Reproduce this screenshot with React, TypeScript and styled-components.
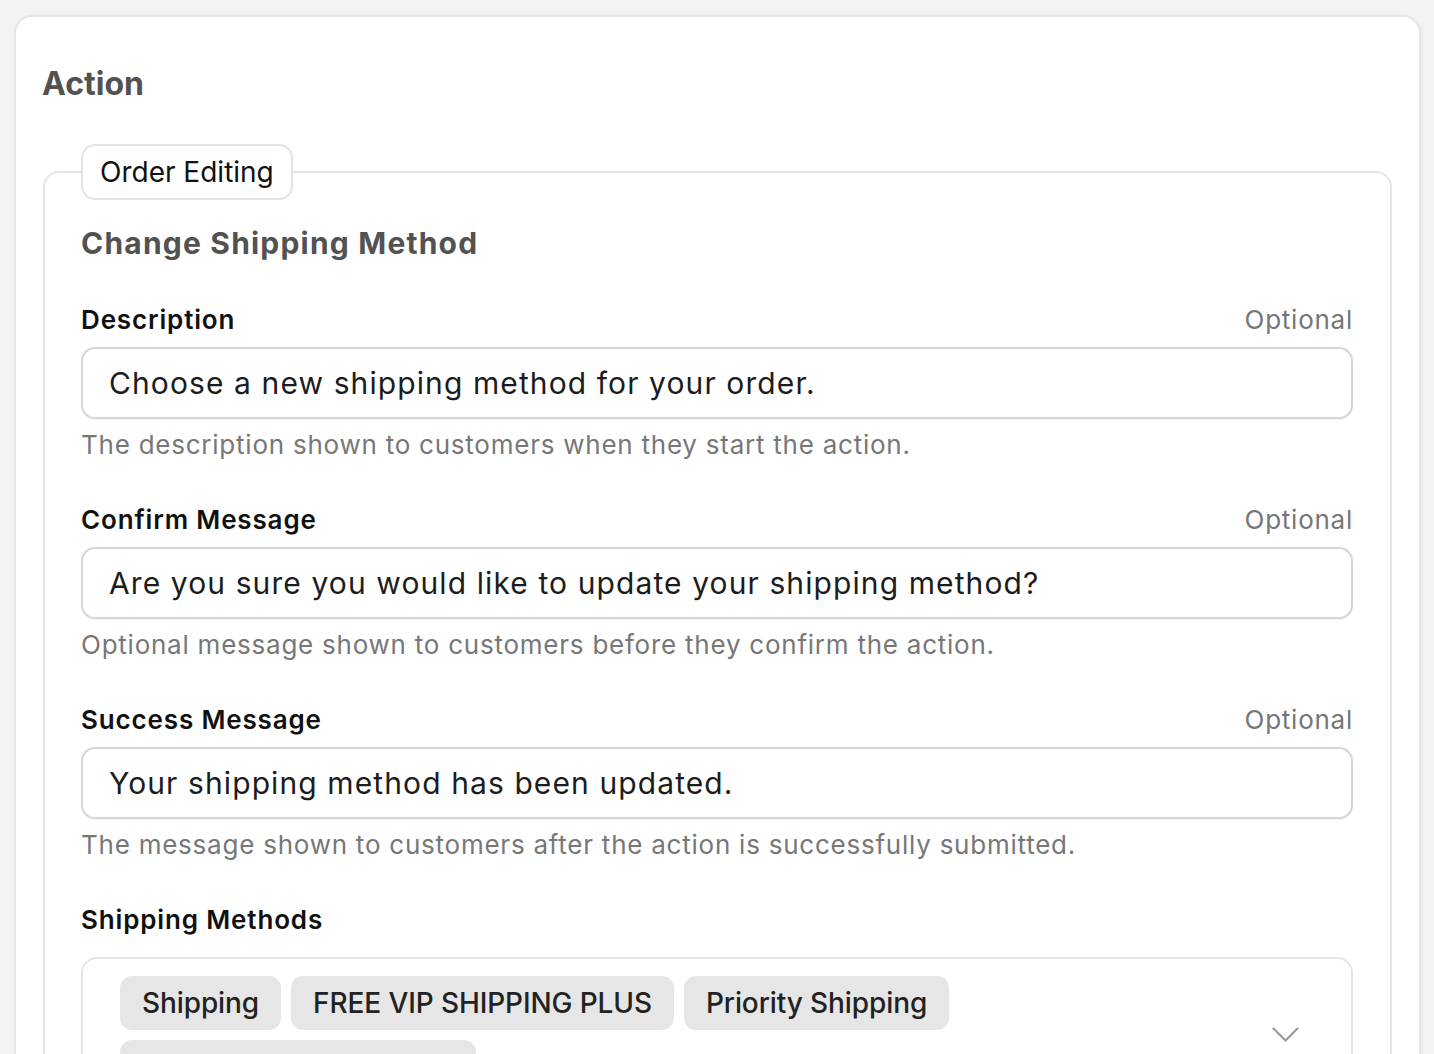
import { createGlobalStyle } from 'styled-components';
import styled from 'styled-components';

const GlobalStyle = createGlobalStyle`
  html, body {
    margin: 0;
    padding: 0;
    background: #f3f3f3;
    font-family: Inter, "Noto Sans", "Liberation Sans", sans-serif;
  }
  * {
    box-sizing: border-box;
  }
`;

const Page = styled.div`
  padding: 15px 13px 0 14px;
  height: 1054px;
  overflow: hidden;
`;

const Card = styled.section`
  background: #fff;
  border: 2px solid #e6e6e6;
  border-radius: 18px;
  box-shadow: 1px 1px 4px rgba(0, 0, 0, 0.05);
  padding: 47px 27px 40px 26px;
  min-height: 1200px;
`;

const Heading = styled.h2`
  margin: 0 0 40px;
  font-size: 32px;
  line-height: 40px;
  font-weight: 700;
  color: #525252;
`;

const Group = styled.fieldset`
  margin: 0 0 0 1px;
  padding: 24px 37px 40px 36px;
  border: 2px solid #e5e5e5;
  border-radius: 16px;
  min-width: 0;
`;

const GroupTag = styled.legend`
  margin: 0;
  padding: 0 17px;
  height: 56px;
  line-height: 52px;
  border: 2px solid #e3e3e3;
  border-radius: 14px;
  background: #fff;
  font-size: 28px;
  color: #111;
`;

const Title = styled.h3`
  margin: 0 0 42px;
  font-size: 30px;
  line-height: 38px;
  font-weight: 700;
  letter-spacing: 1.2px;
  color: #525252;
`;

const Field = styled.div`
  display: flex;
  flex-direction: column;
  margin-bottom: 43px;
`;

const LabelRow = styled.div<{ $gap: number }>`
  display: flex;
  justify-content: space-between;
  align-items: baseline;
  height: 32px;
  line-height: 32px;
  margin-bottom: ${(p) => p.$gap}px;
`;

const Label = styled.label`
  font-size: 26px;
  font-weight: 600;
  letter-spacing: 0.85px;
  color: #111;
`;

const Optional = styled.span`
  font-size: 26px;
  letter-spacing: 0.75px;
  color: #767676;
`;

const Input = styled.div`
  height: 72px;
  display: flex;
  align-items: center;
  padding: 0 26px;
  border: 2px solid #d6d6d6;
  border-radius: 14px;
  box-shadow: 0 1px 1px rgba(0, 0, 0, 0.05);
  font-size: 30px;
  letter-spacing: 1.1px;
  color: #1c1c1c;
  background: #fff;
`;

const Help = styled.div`
  margin-top: 10px;
  font-size: 26px;
  line-height: 32px;
  letter-spacing: 0.76px;
  color: #777;
`;

const Select = styled.div`
  display: flex;
  align-items: center;
  border: 2px solid #e5e5e5;
  border-radius: 16px;
  padding: 17px 52px 17px 37px;
  gap: 20px;
`;

const Chips = styled.div`
  flex: 1;
  display: flex;
  flex-wrap: wrap;
  gap: 10px;
`;

const Chip = styled.span`
  display: inline-flex;
  align-items: center;
  height: 54px;
  padding: 0 22px;
  border-radius: 12px;
  background: #e6e6e6;
  font-size: 28px;
  font-weight: 500;
  letter-spacing: -0.1px;
  color: #222;
`;

const Chevron = () => (
  <svg width="27" height="16" viewBox="0 0 27 16" fill="none">
    <path d="M1.5 1.5 L13.5 13.5 L25.5 1.5" stroke="#9a9a9a" strokeWidth="2.2" strokeLinecap="round" />
  </svg>
);

const fields = [
  {
    label: 'Description',
    value: 'Choose a new shipping method for your order.',
    help: 'The description shown to customers when they start the action.',
  },
  {
    label: 'Confirm Message',
    value: 'Are you sure you would like to update your shipping method?',
    help: 'Optional message shown to customers before they confirm the action.',
  },
  {
    label: 'Success Message',
    value: 'Your shipping method has been updated.',
    help: 'The message shown to customers after the action is successfully submitted.',
  },
];

const methods = ['Shipping', 'FREE VIP SHIPPING PLUS', 'Priority Shipping', 'Postal Ground Shipping'];

function App() {
  return (
    <Page>
      <GlobalStyle />
      <Card>
        <Heading>Action</Heading>
        <Group>
          <GroupTag>Order Editing</GroupTag>
          <Title>Change Shipping Method</Title>
          {fields.map((f) => (
            <Field key={f.label}>
              <LabelRow $gap={11}>
                <Label>{f.label}</Label>
                <Optional>Optional</Optional>
              </LabelRow>
              <Input>{f.value}</Input>
              <Help>{f.help}</Help>
            </Field>
          ))}
          <Field>
            <LabelRow $gap={21}>
              <Label>Shipping Methods</Label>
            </LabelRow>
            <Select>
              <Chips>
                {methods.map((m) => (
                  <Chip key={m}>{m}</Chip>
                ))}
              </Chips>
              <Chevron />
            </Select>
          </Field>
        </Group>
      </Card>
    </Page>
  );
}

export default App;
